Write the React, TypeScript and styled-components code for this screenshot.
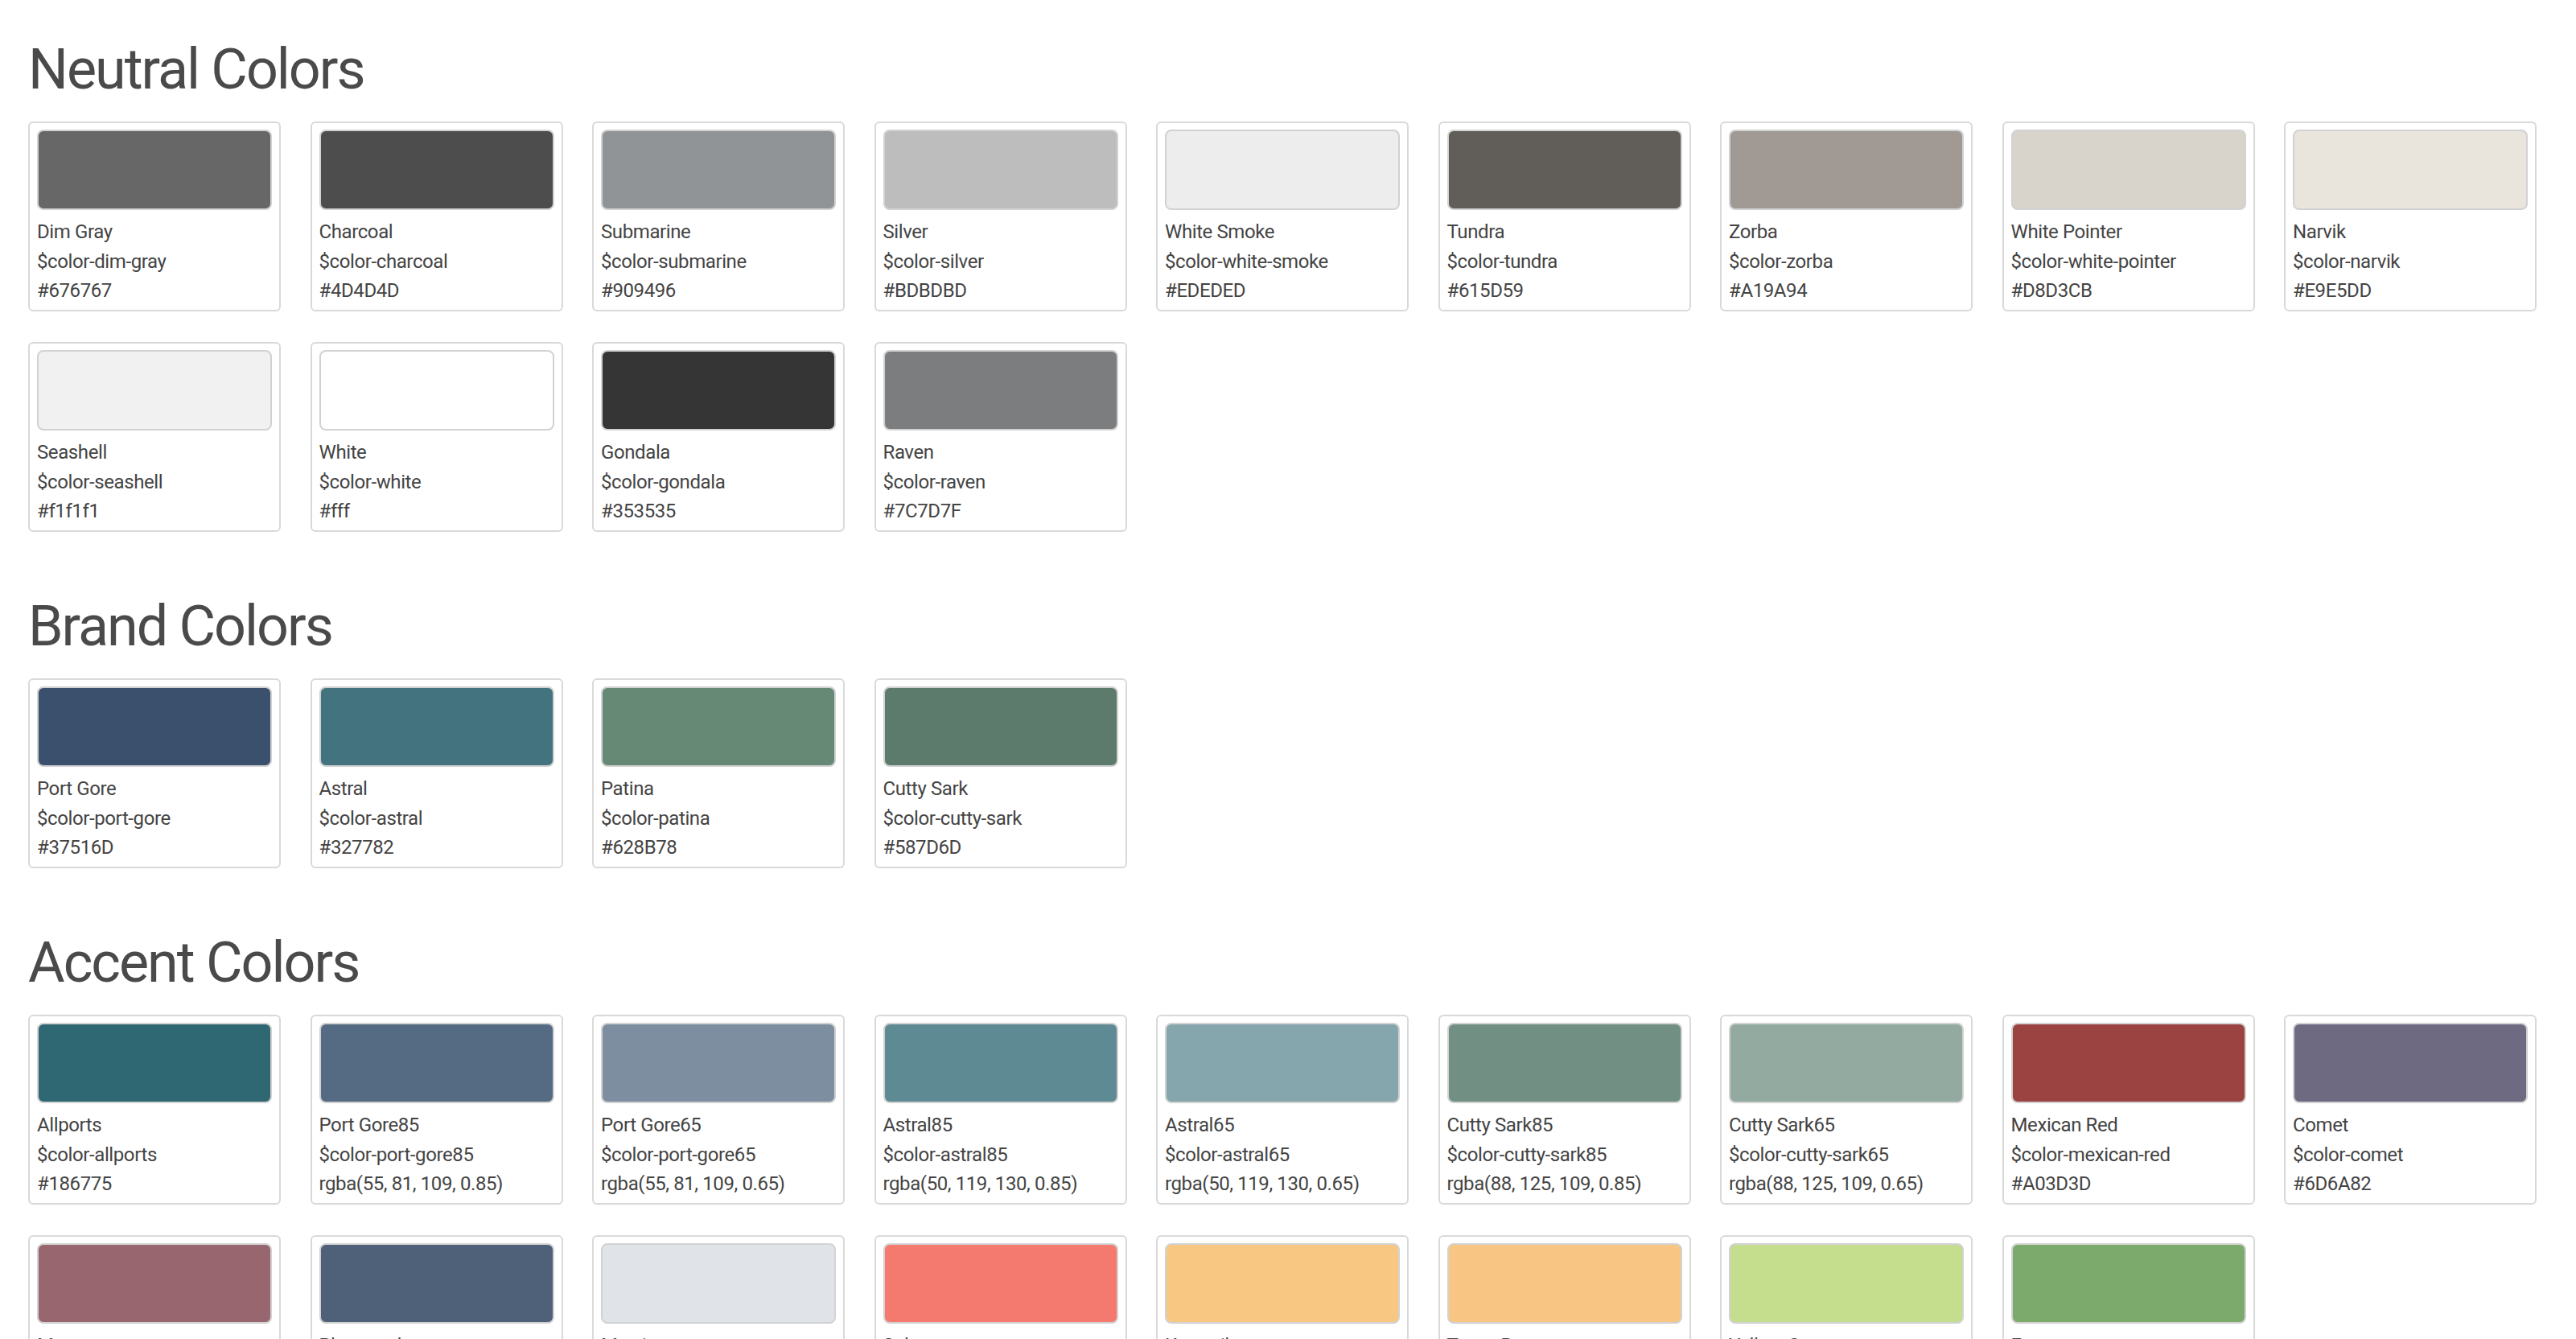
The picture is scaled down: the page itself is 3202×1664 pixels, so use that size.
import React from "react";
import styled, { createGlobalStyle } from "styled-components";

const Global = createGlobalStyle`
  body { margin: 0; background: #fff; font-family: Roboto, "Liberation Sans", sans-serif; color: #454545; }
`;

const Page = styled.div`
  padding: 44px 0 0 35px;
`;
const Section = styled.section`
  margin-bottom: 75px;
`;
const Heading = styled.h2`
  margin: 0 0 23px;
  font-size: 70px;
  line-height: 84px;
  font-weight: 400;
  letter-spacing: -2px;
  color: #4a4a4a;
`;
const Grid = styled.div`
  display: grid;
  grid-template-columns: repeat(9, 314px);
  column-gap: 36.5px;
  row-gap: 38px;
`;
const Card = styled.div`
  box-sizing: border-box;
  height: 236px;
  border: 2px solid #d9d9d9;
  border-radius: 6px;
  padding: 8px 9px;
`;
const Swatch = styled.div<{ $c: string }>`
  height: 100px;
  border: 2px solid #d2d2d2;
  border-radius: 8px;
  background: ${(p) => p.$c};
  box-sizing: border-box;
  margin-bottom: 9px;
`;
const Line = styled.div`
  font-size: 24px;
  line-height: 36.5px;
  letter-spacing: -0.4px;
  color: #444;
  white-space: nowrap;
`;

type C = [string, string, string, string?];
const neutral: C[] = [
  ["Dim Gray", "dim-gray", "#676767"],
  ["Charcoal", "charcoal", "#4D4D4D"],
  ["Submarine", "submarine", "#909496"],
  ["Silver", "silver", "#BDBDBD"],
  ["White Smoke", "white-smoke", "#EDEDED"],
  ["Tundra", "tundra", "#615D59"],
  ["Zorba", "zorba", "#A19A94"],
  ["White Pointer", "white-pointer", "#D8D3CB"],
  ["Narvik", "narvik", "#E9E5DD"],
  ["Seashell", "seashell", "#f1f1f1"],
  ["White", "white", "#fff"],
  ["Gondala", "gondala", "#353535"],
  ["Raven", "raven", "#7C7D7F"],
];
const brand: C[] = [
  ["Port Gore", "port-gore", "#37516D", "#3B506D"],
  ["Astral", "astral", "#327782", "#43737E"],
  ["Patina", "patina", "#628B78", "#668976"],
  ["Cutty Sark", "cutty-sark", "#587D6D", "#5D7B6D"],
];
const accent: C[] = [
  ["Allports", "allports", "#186775", "#2F6773"],
  ["Port Gore85", "port-gore85", "rgba(55, 81, 109, 0.85)"],
  ["Port Gore65", "port-gore65", "rgba(55, 81, 109, 0.65)"],
  ["Astral85", "astral85", "rgba(50, 119, 130, 0.85)", "#5D8A93"],
  ["Astral65", "astral65", "rgba(50, 119, 130, 0.65)", "#85A6AC"],
  ["Cutty Sark85", "cutty-sark85", "rgba(88, 125, 109, 0.85)"],
  ["Cutty Sark65", "cutty-sark65", "rgba(88, 125, 109, 0.65)"],
  ["Mexican Red", "mexican-red", "#A03D3D", "#9A4340"],
  ["Comet", "comet", "#6D6A82"],
  ["Mauve", "mauve", "#98666F"],
  ["Bluewood", "bluewood", "#4F6079"],
  ["Mystic", "mystic", "#E0E4E8"],
  ["Salmon", "salmon", "#F47A70"],
  ["Koromiko", "koromiko", "#F8C882"],
  ["Texas Rose", "texas-rose", "#F8C682"],
  ["Yellow Green", "yellow-green", "#C5DE8D"],
  ["Fern", "fern", "#7CAA6D"],
];

const Group = ({ title, items }: { title: string; items: C[] }) => (
  <Section>
    <Heading>{title}</Heading>
    <Grid>
      {items.map(([n, v, h, d]) => (
        <Card key={v}>
          <Swatch $c={d || h} />
          <Line>{n}</Line>
          <Line>$color-{v}</Line>
          <Line>{h}</Line>
        </Card>
      ))}
    </Grid>
  </Section>
);

export default function App() {
  return (
    <Page>
      <Global />
      <Group title="Neutral Colors" items={neutral} />
      <Group title="Brand Colors" items={brand} />
      <Group title="Accent Colors" items={accent} />
    </Page>
  );
}
